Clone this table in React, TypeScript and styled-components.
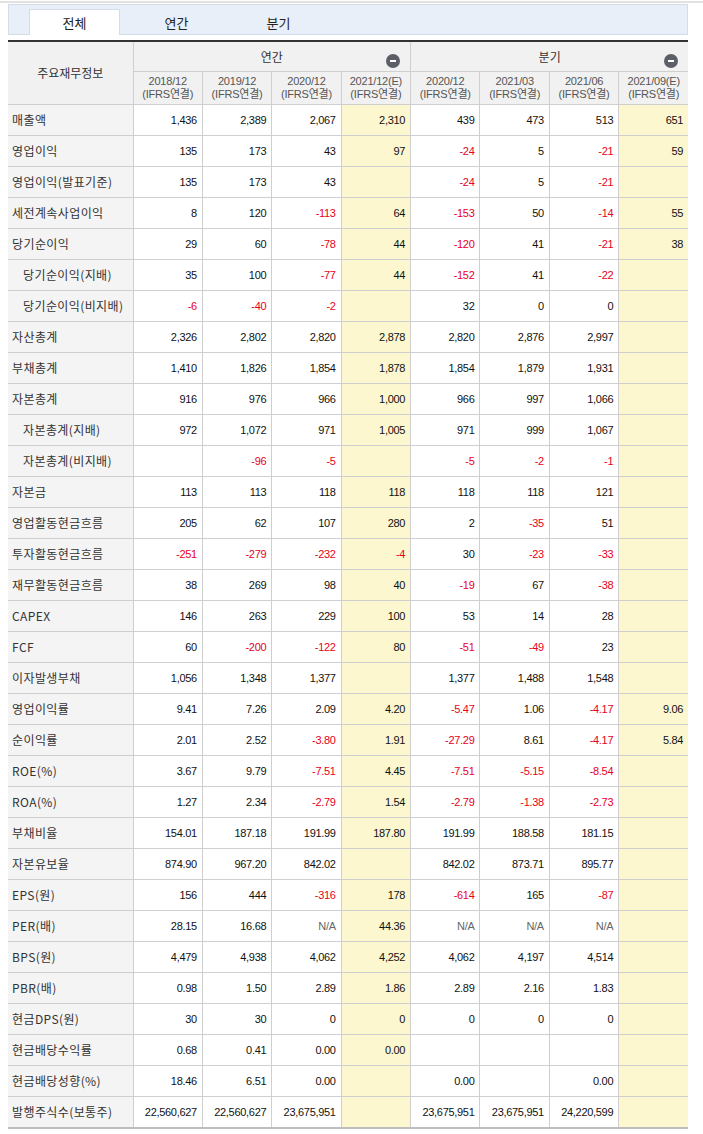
import styled, { createGlobalStyle } from "styled-components";

const GlobalStyle = createGlobalStyle`
  html, body {
    margin:0;
    padding:0;
    background:#fff;
  }
  body{
    font-family:"Liberation Sans", "Noto Sans CJK KR", sans-serif;
    color:#333;
  }
`;

const Page = styled.div`
  width:703px;
  height:1134px;
  overflow:hidden;
  padding-top:1px;
  box-sizing:border-box;
`;

const TopLine = styled.div`
  border-top:2px solid #e1e1e1;
`;

const Inner = styled.div`
  width:680px;
  margin:1px 0 0 8px;
`;

const TabBar = styled.ul`
  display:flex;
  gap:11px;
  list-style:none;
  margin:0;
  padding:4px 0 0 20px;
  height:25px;
  background:#e8eff9;
  border:1px solid #d3dce8;
`;

const Tab = styled.li<{ $active?: boolean }>`
  width:91px;
  height:${({$active})=>$active ? "26px" : "25px"};
  box-sizing:border-box;
  display:flex;
  align-items:center;
  justify-content:center;
  font-family:"Noto Sans CJK KR", sans-serif;
  font-size:13px;
  color:#222;
  background:${({$active})=>$active ? "#fff" : "transparent"};
  border:1px solid ${({$active})=>$active ? "#d3dce8" : "transparent"};
  border-bottom:none;
`;

const Table = styled.table`
  width:680px;
  margin-top:5px;
  border-collapse:collapse;
  table-layout:fixed;
  border-top:2px solid #333;
  border-bottom:2px solid #bdbdbd;
`;

const HeadCell = styled.th`
  position:relative;
  background:#f1f1f1;
  border:1px solid #cfcfcf;
  border-top:none;
  font-weight:normal;
  font-family:"Noto Sans CJK KR", sans-serif;
  font-size:12px;
  color:#333;
  padding:0;
`;

const GroupCell = styled(HeadCell)`
  height:30px;
  vertical-align:top;
  padding-top:6px;
  box-sizing:border-box;
`;

const DateCell = styled(HeadCell)`
  height:32px;
  font-family:"Liberation Sans", "Noto Sans CJK KR", sans-serif;
  font-size:11px;
  line-height:13px;
  color:#555;
  letter-spacing:-0.2px;
`;

const Collapse = styled.span`
  position:absolute;
  right:10px;
  top:12px;
  width:14px;
  height:14px;
  border-radius:50%;
  background:#5c5f68;
  &::after{
    content:"";
    position:absolute;
    left:4px;
    top:6px;
    width:6px;
    height:2px;
    background:#fff;
  }
`;

const Label = styled.th<{ $indent?: boolean }>`
  height:30px;
  padding:0 0 0 ${({$indent})=>$indent ? "15px" : "4px"};
  text-align:left;
  font-weight:normal;
  font-family:"Noto Sans CJK KR", sans-serif;
  font-size:12px;
  letter-spacing:0.4px;
  color:#333;
  background:#f4f4f4;
  border:1px solid #cfcfcf;
  border-left:none;
  white-space:nowrap;
  overflow:hidden;
`;

const Cell = styled.td<{ $est?: boolean; $neg?: boolean; $na?: boolean }>`
  padding:0 5px 0 0;
  text-align:right;
  font-size:11px;
  letter-spacing:-0.3px;
  color:${({$neg,$na})=>$neg ? "#e8001c" : $na ? "#666" : "#111"};
  background:${({$est})=>$est ? "#fcf7cf" : "#fff"};
  border:1px solid #cfcfcf;
  white-space:nowrap;
  &:last-child{
    border-right:none;
  }
`;

const Note = styled.p`
  margin:2px 0 0;
  text-align:right;
  font-family:"Noto Sans CJK KR", sans-serif;
  font-size:11px;
  color:#555;
`;

const dates = [
  "2018/12", "2019/12", "2020/12", "2021/12(E)",
  "2020/12", "2021/03", "2021/06", "2021/09(E)",
];
const estimates = [3, 7];

type Row = { label: string; indent?: boolean; values: string[] };

const rows: Row[] = [
  { label: "매출액", values: ["1,436", "2,389", "2,067", "2,310", "439", "473", "513", "651"] },
  { label: "영업이익", values: ["135", "173", "43", "97", "-24", "5", "-21", "59"] },
  { label: "영업이익(발표기준)", values: ["135", "173", "43", "", "-24", "5", "-21", ""] },
  { label: "세전계속사업이익", values: ["8", "120", "-113", "64", "-153", "50", "-14", "55"] },
  { label: "당기순이익", values: ["29", "60", "-78", "44", "-120", "41", "-21", "38"] },
  { label: "당기순이익(지배)", indent: true, values: ["35", "100", "-77", "44", "-152", "41", "-22", ""] },
  { label: "당기순이익(비지배)", indent: true, values: ["-6", "-40", "-2", "", "32", "0", "0", ""] },
  { label: "자산총계", values: ["2,326", "2,802", "2,820", "2,878", "2,820", "2,876", "2,997", ""] },
  { label: "부채총계", values: ["1,410", "1,826", "1,854", "1,878", "1,854", "1,879", "1,931", ""] },
  { label: "자본총계", values: ["916", "976", "966", "1,000", "966", "997", "1,066", ""] },
  { label: "자본총계(지배)", indent: true, values: ["972", "1,072", "971", "1,005", "971", "999", "1,067", ""] },
  { label: "자본총계(비지배)", indent: true, values: ["", "-96", "-5", "", "-5", "-2", "-1", ""] },
  { label: "자본금", values: ["113", "113", "118", "118", "118", "118", "121", ""] },
  { label: "영업활동현금흐름", values: ["205", "62", "107", "280", "2", "-35", "51", ""] },
  { label: "투자활동현금흐름", values: ["-251", "-279", "-232", "-4", "30", "-23", "-33", ""] },
  { label: "재무활동현금흐름", values: ["38", "269", "98", "40", "-19", "67", "-38", ""] },
  { label: "CAPEX", values: ["146", "263", "229", "100", "53", "14", "28", ""] },
  { label: "FCF", values: ["60", "-200", "-122", "80", "-51", "-49", "23", ""] },
  { label: "이자발생부채", values: ["1,056", "1,348", "1,377", "", "1,377", "1,488", "1,548", ""] },
  { label: "영업이익률", values: ["9.41", "7.26", "2.09", "4.20", "-5.47", "1.06", "-4.17", "9.06"] },
  { label: "순이익률", values: ["2.01", "2.52", "-3.80", "1.91", "-27.29", "8.61", "-4.17", "5.84"] },
  { label: "ROE(%)", values: ["3.67", "9.79", "-7.51", "4.45", "-7.51", "-5.15", "-8.54", ""] },
  { label: "ROA(%)", values: ["1.27", "2.34", "-2.79", "1.54", "-2.79", "-1.38", "-2.73", ""] },
  { label: "부채비율", values: ["154.01", "187.18", "191.99", "187.80", "191.99", "188.58", "181.15", ""] },
  { label: "자본유보율", values: ["874.90", "967.20", "842.02", "", "842.02", "873.71", "895.77", ""] },
  { label: "EPS(원)", values: ["156", "444", "-316", "178", "-614", "165", "-87", ""] },
  { label: "PER(배)", values: ["28.15", "16.68", "N/A", "44.36", "N/A", "N/A", "N/A", ""] },
  { label: "BPS(원)", values: ["4,479", "4,938", "4,062", "4,252", "4,062", "4,197", "4,514", ""] },
  { label: "PBR(배)", values: ["0.98", "1.50", "2.89", "1.86", "2.89", "2.16", "1.83", ""] },
  { label: "현금DPS(원)", values: ["30", "30", "0", "0", "0", "0", "0", ""] },
  { label: "현금배당수익률", values: ["0.68", "0.41", "0.00", "0.00", "", "", "", ""] },
  { label: "현금배당성향(%)", values: ["18.46", "6.51", "0.00", "", "0.00", "", "0.00", ""] },
  { label: "발행주식수(보통주)", values: ["22,560,627", "22,560,627", "23,675,951", "", "23,675,951", "23,675,951", "24,220,599", ""] },
];

const App = () => {

  return (
    <Page>
    <GlobalStyle />
    <TopLine />
    <Inner>

    <TabBar>
      <Tab $active>전체</Tab>
      <Tab>연간</Tab>
      <Tab>분기</Tab>
    </TabBar>

    <Table>
    <colgroup>
      <col style={{ width: 125 }} />
      {dates.map((_, i) => <col key={i} style={{ width: 69.4 }} />)}
    </colgroup>
    <thead>
      <tr>
        <HeadCell rowSpan={2} style={{ borderLeft: "none" }}>주요재무정보</HeadCell>
        <GroupCell colSpan={4}>연간<Collapse /></GroupCell>
        <GroupCell colSpan={4} style={{ borderRight: "none" }}>분기<Collapse /></GroupCell>
      </tr>
      <tr>
        {dates.map((d, i) => (
          <DateCell key={i} style={i === 7 ? { borderRight: "none" } : undefined}>
            {d}<br />(IFRS연결)
          </DateCell>
        ))}
      </tr>
    </thead>
    <tbody>
      {rows.map((r) => (
        <tr key={r.label}>
          <Label scope="row" $indent={r.indent}>{r.label}</Label>
          {r.values.map((v, i) => (
            <Cell
              key={i}
              $est={estimates.includes(i)}
              $neg={v.startsWith("-")}
              $na={v === "N/A"}
            >
              {v}
            </Cell>
          ))}
        </tr>
      ))}
    </tbody>
    </Table>

    <Note>
      (단위 : 억원, %, 배, 천주) 분기: 순액기준 · 컨센서스는 최근 3개월간 증권사에서 발표한 전망치의 평균값입니다
    </Note>

    </Inner>
    </Page>
  )

}

export default App;
